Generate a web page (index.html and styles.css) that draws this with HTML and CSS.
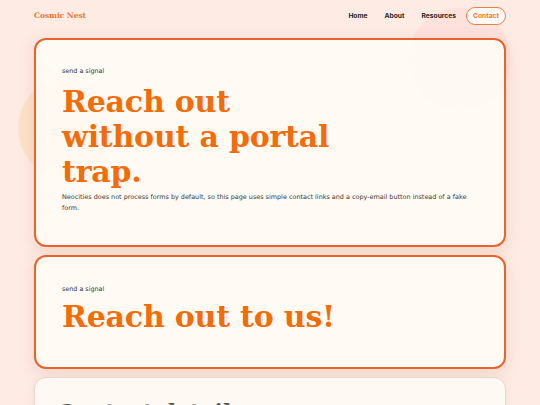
FILE: index.html
```html
<!DOCTYPE html>
<html lang="en">
<head>
<meta charset="utf-8">
<title>Contact - Cosmic Nest</title>
<link rel="stylesheet" href="styles.css">
</head>
<body>
<div class="orb orb-sun"></div>
<div class="orb orb-rose"></div>
<header class="site-header">
  <a class="brand" href="#">Cosmic Nest</a>
  <nav class="nav">
    <a class="nav-link" href="#">Home</a>
    <a class="nav-link" href="#">About</a>
    <a class="nav-link" href="#">Resources</a>
    <a class="nav-link nav-link-active" href="#">Contact</a>
  </nav>
</header>
<main class="page">
  <section class="card card-hero">
    <p class="eyebrow">send a signal</p>
    <h1 class="hero-title">Reach out without a portal trap.</h1>
    <p class="lede">Neocities does not process forms by default, so this page uses simple contact links and a copy-email button instead of a fake form.</p>
  </section>
  <section class="card card-banner">
    <p class="eyebrow">send a signal</p>
    <h2 class="banner-title">Reach out to us!</h2>
  </section>
  <section class="card card-plain">
    <h2 class="plain-title">Contact details</h2>
  </section>
</main>
</body>
</html>
```
FILE: styles.css
```css
* { box-sizing: border-box; }

html, body { margin: 0; padding: 0; }

body {
  background: #fdebe4;
  font-family: "DejaVu Sans", Verdana, sans-serif;
  color: #333;
  position: relative;
  min-height: 405px;
  overflow: hidden;
}

.orb {
  position: absolute;
  border-radius: 50%;
  z-index: 0;
}

.orb-sun {
  left: 18px;
  top: 78px;
  width: 100px;
  height: 100px;
  background: #fbe2c6;
}

.orb-rose {
  left: 408px;
  top: 8px;
  width: 103px;
  height: 103px;
  background: #fde1dc;
}

.site-header {
  position: relative;
  z-index: 1;
  height: 31px;
  padding: 0 34px;
  display: flex;
  align-items: center;
  justify-content: space-between;
}

.brand {
  font-family: "DejaVu Serif", Georgia, serif;
  font-weight: 700;
  font-size: 7.6px;
  color: #f07a30;
  text-decoration: none;
  letter-spacing: -0.1px;
}

.nav {
  display: flex;
  align-items: center;
  gap: 3px;
}

.nav-link {
  font-family: Inter, "Open Sans", sans-serif;
  font-weight: 700;
  font-size: 6.7px;
  color: #2a2523;
  text-decoration: none;
  padding: 4px 6px;
  line-height: 8px;
  border: 1px solid transparent;
  border-radius: 9px;
}

.nav-link-active {
  color: #f07a30;
  border-color: #ee7d4a;
  background: #fffaf6;
}

.page {
  position: relative;
  z-index: 1;
  padding: 7px 34px 0;
  display: flex;
  flex-direction: column;
  gap: 8px;
}

.card {
  border: 2px solid #e9632d;
  border-radius: 12px;
  background: rgba(255, 252, 245, 0.9);
  box-shadow: 0 4px 16px rgba(200, 120, 90, 0.2);
  padding: 0 26px;
}

.eyebrow {
  margin: 0;
  font-size: 6.4px;
  line-height: 8px;
  color: #333;
}

.card-hero {
  height: 209px;
  padding-top: 27px;
}

.hero-title {
  margin: 9px 0 0;
  max-width: 300px;
  font-family: "DejaVu Serif", Georgia, serif;
  font-weight: 700;
  font-size: 30px;
  line-height: 35px;
  color: #f46c0a;
  letter-spacing: -0.2px;
}

.lede {
  margin: 3px 0 0;
  max-width: 410px;
  font-size: 6.45px;
  line-height: 11px;
  color: #3d3a38;
}

.card-banner {
  height: 114px;
  padding-top: 28px;
  background: linear-gradient(#fffaf2 0, #fffaf2 12px, rgba(255, 252, 245, 0.95) 12px);
}

.banner-title {
  margin: 6px 0 0;
  font-family: "DejaVu Serif", Georgia, serif;
  font-weight: 700;
  font-size: 30px;
  line-height: 35px;
  color: #f46c0a;
  letter-spacing: -0.2px;
}

.card-plain {
  border: 1px solid #e6d7cf;
  background: #fff9f4;
  height: 120px;
  padding: 20px 22px 0;
  box-shadow: 0 2px 8px rgba(200, 150, 130, 0.12);
}

.plain-title {
  margin: 0;
  font-family: "DejaVu Serif", Georgia, serif;
  font-weight: 700;
  font-size: 22px;
  line-height: 28px;
  color: #5a5f58;
}
```
